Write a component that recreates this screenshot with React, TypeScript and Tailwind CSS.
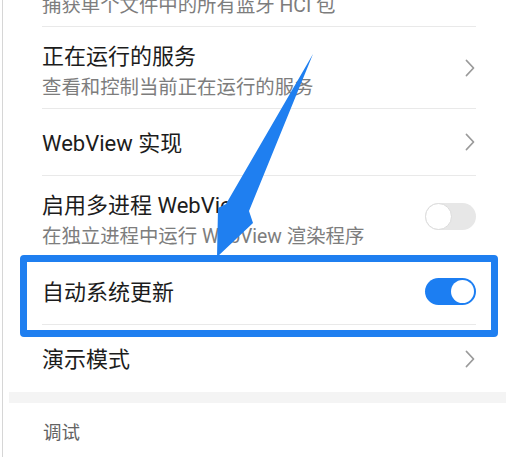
import React from "react";

// ICONS
function Chevron() {
  return (
    <svg width="12" height="18" viewBox="0 0 12 18" className="shrink-0">
      <polyline
        points="2.5,1.5 9.5,9 2.5,16.5"
        fill="none"
        stroke="#9a9a9a"
        strokeWidth="1.8"
        strokeLinecap="round"
        strokeLinejoin="round"
      />
    </svg>
  );
}

function Toggle({ on }: { on: boolean }) {
  if (on) {
    return (
      <div className="flex h-[27px] w-[51px] shrink-0 items-center justify-end rounded-full bg-[#1c7ef2] pr-[2px]">
        <div className="h-[23px] w-[23px] rounded-full bg-white" />
      </div>
    );
  }
  return (
    <div className="flex h-[27px] w-[51px] shrink-0 items-center rounded-full bg-[#e7e7e7]">
      <div className="h-[27px] w-[27px] rounded-full border border-[#dcdcdc] bg-white" />
    </div>
  );
}

type RowProps = {
  title?: string;
  subtitle?: string;
  right: "chevron" | "on" | "off";
  tall?: boolean;
  last?: boolean;
};

function Row({ title, subtitle, right, tall, last }: RowProps) {
  return (
    <div
      className={`ml-[33px] mr-[30px] flex items-center justify-between ${
        tall ? "h-[82px]" : "h-[67px]"
      } ${last ? "" : "border-b border-[#e9e9e9]"}`}
    >
      <div className={`flex flex-col ${subtitle ? "pt-[7px]" : "pt-[3px]"}`}>
        {title && (
          <span className="text-[22px] leading-[30px] text-[#1c1c1c]">{title}</span>
        )}
        {subtitle && (
          <span className="mt-[3px] text-[19.4px] leading-[26px] text-[#7d7d7d]">
            {subtitle}
          </span>
        )}
      </div>
      {right === "chevron" ? <Chevron /> : <Toggle on={right === "on"} />}
    </div>
  );
}

export default function App() {
  return (
    <div className="relative h-[457px] w-[506px] overflow-hidden bg-white font-['Roboto','Noto_Sans_CJK_SC',sans-serif]">
      {/* left edge of the phone frame */}
      <div className="flex h-full">
        <div className="ml-[2px] w-px shrink-0 bg-[#d6d6d6]" />
        <div className="ml-[6px] flex min-w-0 flex-1 flex-col">
          <div className="-mt-[55px]">
            <Row title="蓝牙 HCI 信息收集日志" subtitle="捕获单个文件中的所有蓝牙 HCI 包" right="off" tall />
          </div>
          <Row title="正在运行的服务" subtitle="查看和控制当前正在运行的服务" right="chevron" tall />
          <Row title="WebView 实现" right="chevron" />
          <Row title="启用多进程 WebView" subtitle="在独立进程中运行 WebView 渲染程序" right="off" tall />
          <Row title="自动系统更新" right="on" />
          <Row title="演示模式" right="chevron" last />
          <div className="h-[11px] bg-[#f4f4f4]" />
          <div className="ml-[34px] pt-[18px] text-[18.5px] leading-[24px] text-[#636363]">调试</div>
        </div>
      </div>

      {/* annotation: highlight box */}
      <div className="absolute left-[20px] top-[255px] h-[82px] w-[478px] rounded-[4px] border-[7px] border-[#1f7ff0]" />

      {/* annotation: arrow */}
      <svg className="absolute left-0 top-0" width="506" height="457" viewBox="0 0 506 457">
        <polygon
          points="313,54 249,211 253,223 217,257 218,208 226,204"
          fill="#1f7ff0"
        />
      </svg>
    </div>
  );
}
